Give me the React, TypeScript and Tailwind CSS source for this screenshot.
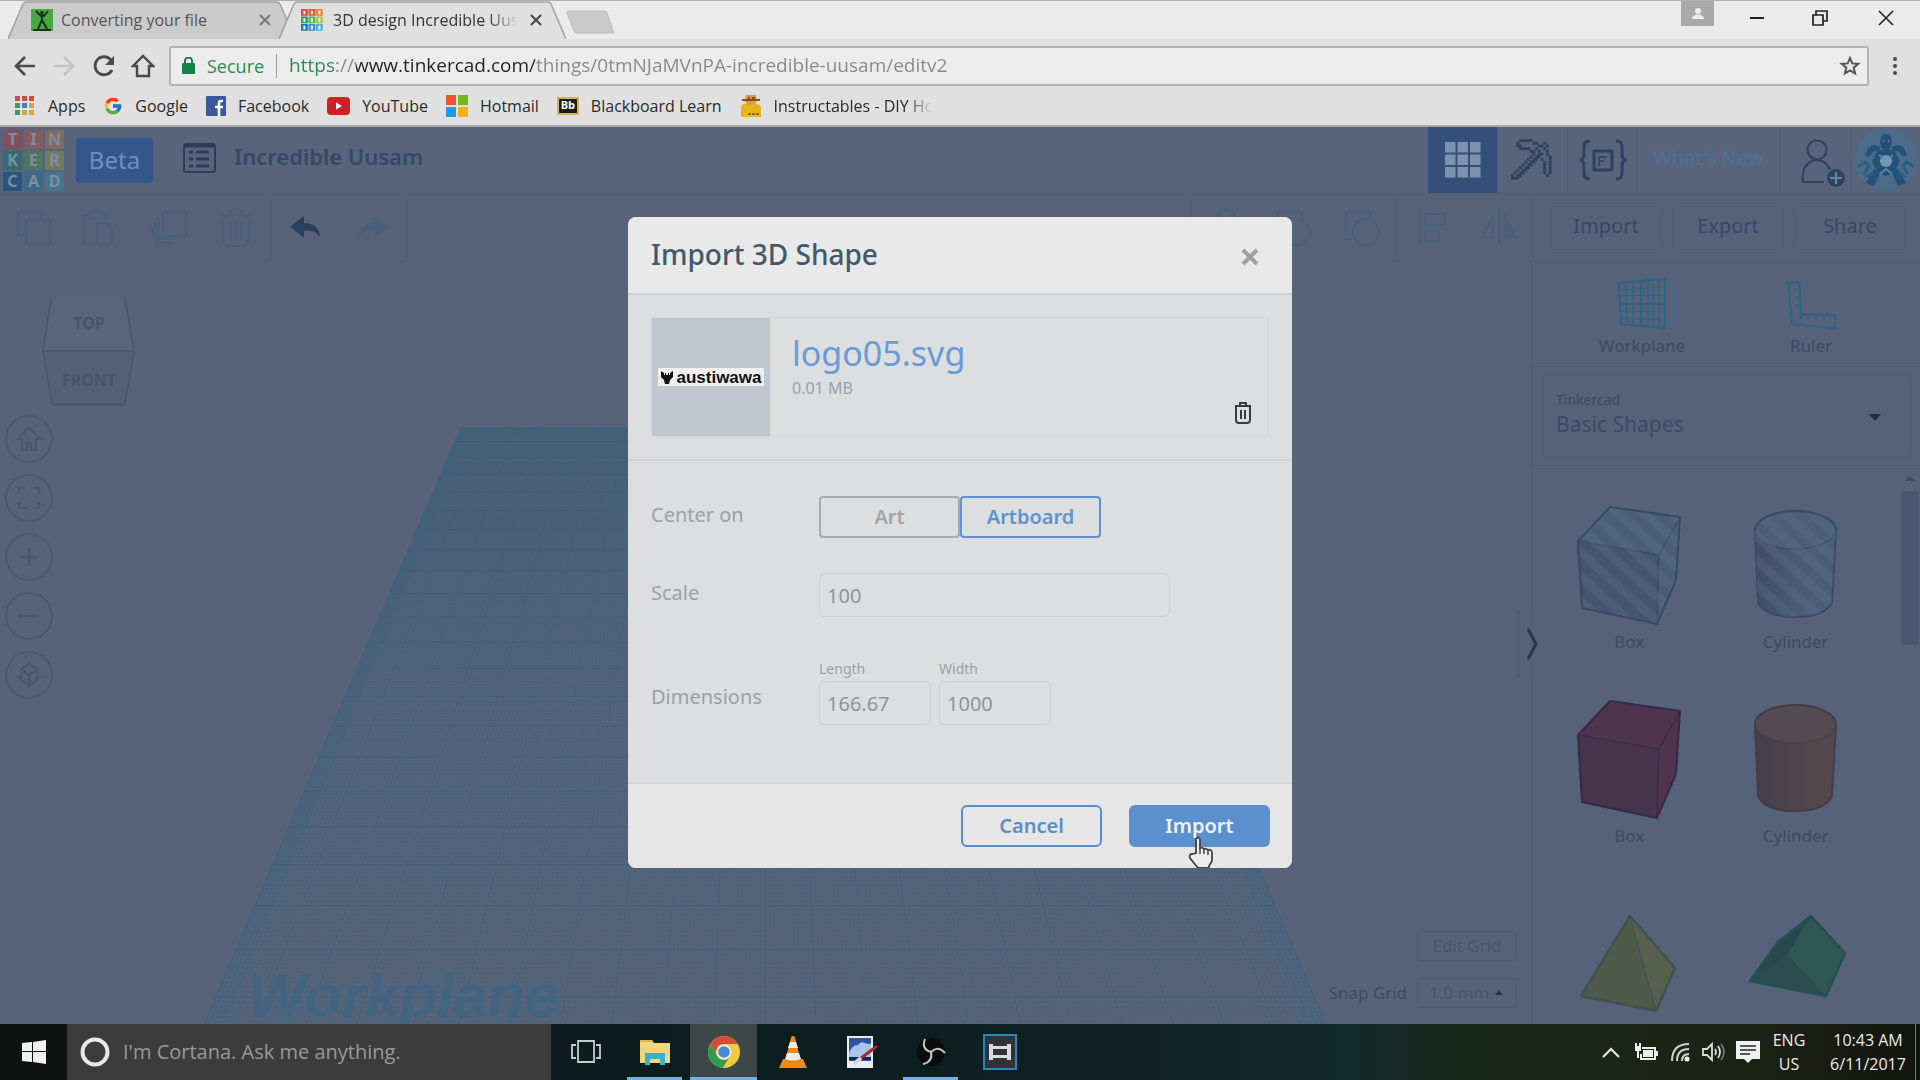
import type { ReactNode } from "react";
import { FcGoogle } from "react-icons/fc";

const pickaxe = [
    "...#####........",
    "..#.....##..#...",
    "..##......##.#..",
    "...####..#..#...",
    ".......##.#..#..",
    "........#.##.#..",
    ".......#.##...#.",
    "......#.##.#..#.",
    ".....#.##...#.#.",
    "....#.##....#.#.",
    "...#.##.....#.#.",
    "..#.##......#.#.",
    ".#.##.......#.#.",
    "#.##.........#..",
    "###.............",
];

const logoTiles = [
    { letter: "T", className: "bg-[#84505f]" },
    { letter: "I", className: "bg-[#855b63]" },
    { letter: "N", className: "bg-[#83695f]" },
    { letter: "K", className: "bg-[#356a72]" },
    { letter: "E", className: "bg-[#4f7760]" },
    { letter: "R", className: "bg-[#717b5d]" },
    { letter: "C", className: "bg-[#28557f]" },
    { letter: "A", className: "bg-[#3d6887]" },
    { letter: "D", className: "bg-[#46738f]" },
];

const favTiles = ["#d9483b", "#e0562f", "#e58a34", "#2f9e6b", "#5ab54a", "#b3bf3f", "#2273b8", "#3a93cf", "#52aee0"];

function TabShape({ fill }: { fill: string }) {
    return (
        <svg className="absolute inset-0 size-full" viewBox="0 0 287 38" preserveAspectRatio="none">
            <path d="M0 38 L15 3 Q16 1 19 1 H268 Q271 1 272 3 L287 38" fill={fill} stroke="#a2a2a2" strokeWidth="1.5" />
        </svg>
    );
}

function TabClose({ color }: { color: string }) {
    return (
        <button aria-label="Close tab" className="shrink-0">
            <svg width="12" height="12" viewBox="0 0 12 12" stroke={color} strokeWidth="2">
                <path d="M1 1l10 10M11 1L1 11" />
            </svg>
        </button>
    );
}

function TabStrip() {
    return (
        <div className="flex h-[39px] shrink-0 border-t border-[#b0b0b0] bg-[#ebebeb] pl-2">
            <div className="relative flex w-[287px] items-center pl-[23px] pr-6">
                <TabShape fill="#cbcbcb" />
                <svg className="relative" width="22" height="22" viewBox="0 0 22 22">
                    <rect width="22" height="22" fill="#49a843" />
                    <path d="M5 2l5 5h3l4-5M11 5v6l-4 9M11 11l5 9M2 21h18" stroke="#16351c" strokeWidth="2" fill="none" />
                    <circle cx="11" cy="4" r="2" fill="#16351c" />
                </svg>
                <span className="relative ml-2 flex-1 text-base text-[#555]">Converting your file</span>
                <span className="relative flex"><TabClose color="#777" /></span>
            </div>
            <div className="relative -ml-4 flex w-[287px] items-center pl-[22px] pr-6">
                <TabShape fill="#e0e0e0" />
                <svg className="relative" width="22" height="22" viewBox="0 0 22 22">
                    {favTiles.map((fill, i) => (
                        <g key={i}>
                            <rect x={(i % 3) * 7.5} y={Math.floor(i / 3) * 7.5} width="6.8" height="6.8" fill={fill} />
                            <rect x={(i % 3) * 7.5 + 2.4} y={Math.floor(i / 3) * 7.5 + 1.6} width="2" height="3.8" fill="#f2f2f2" />
                        </g>
                    ))}
                </svg>
                <span className="relative ml-[10px] mr-3 flex-1 overflow-hidden whitespace-nowrap text-base text-[#333] [mask-image:linear-gradient(90deg,#000_84%,transparent)]">
                    3D design Incredible Uusam
                </span>
                <span className="relative flex"><TabClose color="#444" /></span>
            </div>
            <button aria-label="New tab" className="self-start pt-[9px]">
                <svg width="50" height="25" viewBox="0 0 50 25">
                    <path d="M2 1H38Q40 1 41 3L48 23H11Q9 23 8 21L1 3Z" fill="#cacaca" stroke="#bbb" />
                </svg>
            </button>
            <div className="ml-auto flex">
                <button aria-label="Profile" className="mr-3 flex h-[25px] w-[33px] items-center justify-center bg-[#a9a9a9]">
                    <svg width="14" height="14" viewBox="0 0 14 14" fill="#ededed">
                        <circle cx="7" cy="4" r="3" />
                        <path d="M1 12c0-6 12-6 12 0z" />
                    </svg>
                </button>
                <button aria-label="Minimize" className="flex w-[62px] items-center justify-center pb-1">
                    <svg width="16" height="16" stroke="#222" strokeWidth="2"><path d="M1 8h14" /></svg>
                </button>
                <button aria-label="Restore" className="flex w-[64px] items-center justify-center pb-1">
                    <svg width="16" height="16" stroke="#222" strokeWidth="1.7" fill="none">
                        <path d="M1 5h10v10H1zM4 5V1h11v10h-4" />
                    </svg>
                </button>
                <button aria-label="Close" className="flex w-[68px] items-center justify-center pb-1">
                    <svg width="16" height="16" stroke="#222" strokeWidth="1.6"><path d="M1 1l14 14M15 1L1 15" /></svg>
                </button>
            </div>
        </div>
    );
}

function AddressBar() {
    return (
        <div className="flex h-[49px] shrink-0 items-center bg-[#e0e0e0] pl-3 pt-1">
            <button aria-label="Back" className="flex w-10">
                <svg width="26" height="24" viewBox="0 0 26 24" stroke="#4a4a4a" strokeWidth="2.6" fill="none">
                    <path d="M23 12H4M13 3l-9 9 9 9" />
                </svg>
            </button>
            <button aria-label="Forward" className="flex w-10">
                <svg width="26" height="24" viewBox="0 0 26 24" stroke="#c3c3c3" strokeWidth="2.6" fill="none">
                    <path d="M2 12h19M12 3l9 9-9 9" />
                </svg>
            </button>
            <button aria-label="Reload" className="flex w-[39px]">
                <svg width="24" height="24" viewBox="0 0 24 24" stroke="#4a4a4a" strokeWidth="2.8" fill="none">
                    <path d="M20 16a9 9 0 1 1-1-10" />
                    <path d="M22 2v9h-9z" fill="#4a4a4a" stroke="none" />
                </svg>
            </button>
            <button aria-label="Home" className="flex w-[38px]">
                <svg width="24" height="24" viewBox="0 0 24 24" stroke="#4a4a4a" strokeWidth="2.4" fill="none">
                    <path d="M2 12L12 2l10 10h-4v10H6V12z" />
                </svg>
            </button>
            <div className="flex h-10 flex-1 items-center rounded-[3px] border-2 border-[#b3b3b3] bg-[#ececec] pl-[11px] pr-[6px]">
                <svg width="13" height="17" viewBox="0 0 13 17">
                    <path d="M3 8V4a3.5 3.5 0 0 1 7 0v4" stroke="#178045" strokeWidth="2" fill="none" />
                    <rect y="6" width="13" height="11" rx="1" fill="#178045" />
                </svg>
                <span className="ml-3 text-lg text-[#2b8a52]">Secure</span>
                <span className="mx-3 h-6 w-px bg-[#999]" />
                <input
                    aria-label="Address"
                    className="min-w-0 flex-1 bg-[linear-gradient(90deg,#2b8a52_48px,#888_48px,#888_67px,#222_67px,#222_246px,#888_246px)] bg-clip-text text-[19px] text-transparent outline-none"
                    defaultValue="https://www.tinkercad.com/things/0tmNJaMVnPA-incredible-uusam/editv2"
                />
                <button aria-label="Bookmark this page">
                    <svg width="22" height="22" viewBox="0 0 22 22" stroke="#555" strokeWidth="2" fill="none">
                        <path d="M11 3l2.3 5.4 5.9.5-4.5 3.8 1.4 5.8L11 15.4l-5.1 3.1 1.4-5.8L2.8 8.9l5.9-.5z" />
                    </svg>
                </button>
            </div>
            <button aria-label="Menu" className="flex w-[51px] justify-center">
                <svg width="6" height="20" fill="#4a4a4a">
                    <circle cx="3" cy="3" r="2" />
                    <circle cx="3" cy="10" r="2" />
                    <circle cx="3" cy="17" r="2" />
                </svg>
            </button>
        </div>
    );
}

function Bookmark({ icon, children }: { icon: ReactNode; children: ReactNode }) {
    return (
        <a href="#" className="flex items-center gap-3 whitespace-nowrap">
            {icon}
            {children}
        </a>
    );
}

const appDots = ["#c94f45", "#c94f45", "#c94f45", "#3f9a5b", "#3b7fc4", "#d6a93c", "#3f9a5b", "#c9a94a", "#d6a93c"];

function BookmarksBar() {
    return (
        <nav className="flex h-[39px] shrink-0 items-center gap-[18px] border-b-2 border-[#a8a8a8] bg-[#e0e0e0] pb-[2px] pl-[14px] text-base text-[#2a2a2a]">
            <Bookmark
                icon={
                    <svg width="22" height="20">
                        {appDots.map((fill, i) => (
                            <rect key={i} x={1 + (i % 3) * 7} y={Math.floor(i / 3) * 7} width="5" height="5" fill={fill} />
                        ))}
                    </svg>
                }
            >
                Apps
            </Bookmark>
            <Bookmark icon={<FcGoogle size={20} />}>Google</Bookmark>
            <Bookmark
                icon={
                    <svg width="20" height="20" viewBox="0 0 20 20">
                        <rect width="20" height="20" rx="1" fill="#3b5998" />
                        <path d="M17 5h-2q-2 0-2 2v13M9 11h8" stroke="#fff" strokeWidth="2.6" fill="none" />
                    </svg>
                }
            >
                Facebook
            </Bookmark>
            <Bookmark
                icon={
                    <svg width="23" height="18" viewBox="0 0 23 18">
                        <rect width="23" height="18" rx="4" fill="#cc2127" />
                        <path d="M9 5.500l6 3.500-6 3.500z" fill="#fff" />
                    </svg>
                }
            >
                YouTube
            </Bookmark>
            <Bookmark
                icon={
                    <svg width="22" height="22">
                        <path d="M0 0h10v10H0z" fill="#e8562c" />
                        <path d="M12 0h10v10H12z" fill="#79b51c" />
                        <path d="M0 12h10v10H0z" fill="#1f9ede" />
                        <path d="M12 12h10v10H12z" fill="#efb11c" />
                    </svg>
                }
            >
                Hotmail
            </Bookmark>
            <Bookmark
                icon={
                    <span className="flex h-[18px] w-[22px] items-center justify-center border-2 border-[#d3b45a] bg-[#1c1c1c] text-[11px] font-bold text-white">
                        Bb
                    </span>
                }
            >
                Blackboard Learn
            </Bookmark>
            <Bookmark
                icon={
                    <svg width="22" height="24" viewBox="0 0 22 24">
                        <path d="M1 23V13q1-4 6-3h8q6 0 6 4v9z" fill="#e8b416" />
                        <path d="M6 1h10l1 5-2 5H7L5 6z" fill="#d99a4a" />
                        <path d="M2 6h18M8 4h2M12 4h3" stroke="#8a4a22" strokeWidth="2" />
                        <path d="M8 20h12" stroke="#8a6a12" strokeWidth="2" strokeDasharray="3 1" />
                    </svg>
                }
            >
                <span className="w-[158px] overflow-hidden [mask-image:linear-gradient(90deg,#000_84%,transparent)]">
                    Instructables - DIY How To
                </span>
            </Bookmark>
        </nav>
    );
}

function AppHeader() {
    return (
        <header className="flex h-[67px] shrink-0 items-center border-b border-[#505d77] bg-[#58647b]">
            <div className="ml-[3px] grid w-[61px] grid-cols-3 gap-[2px]">
                {logoTiles.map((tile) => (
                    <span
                        key={tile.letter}
                        className={`flex h-[19px] items-center justify-center text-base font-bold leading-none text-[#7b8ea3] ${tile.className}`}
                    >
                        {tile.letter}
                    </span>
                ))}
            </div>
            <button className="ml-3 h-[45px] w-[77px] rounded-[4px] bg-[#34568a] text-2xl text-[#7090b5]">Beta</button>
            <button aria-label="Designs" className="ml-[30px] pb-1">
                <svg width="33" height="30" viewBox="0 0 33 30" stroke="#2d3d58" fill="none">
                    <rect x="1" y="1" width="31" height="28" rx="2" strokeWidth="2" />
                    <path d="M1 3h31" strokeWidth="3" />
                    <path d="M6 9h4M6 16h4M6 23h4M13 9h13M13 16h13M13 23h13" strokeWidth="3" />
                </svg>
            </button>
            <h1 className="ml-[18px] pb-2 text-[22px] font-semibold text-[#34496a]">Incredible Uusam</h1>
            <div className="ml-auto flex h-full divide-x divide-[#505d77]">
                <button aria-label="3D view" className="flex w-[70px] items-center justify-center bg-[#34507a]">
                    <svg width="36" height="36" fill="#7d92ad">
                        {[0, 1, 2].map((row) =>
                            [0, 1, 2].map((col) => (
                                <rect key={`${row}${col}`} x={col * 12.500} y={row * 12.500} width="10.5" height="10.5" />
                            )),
                        )}
                    </svg>
                </button>
                <button aria-label="Blocks" className="flex w-[70px] items-center justify-center">
                    <svg width="43" height="42" viewBox="0 0 16 15.500" fill="#2d4262">
                        {pickaxe.map((line, y) =>
                            line.split("").map((c, x) => c === "#" && <rect key={`${x}-${y}`} x={x} y={y} width="1.05" height="1.05" />),
                        )}
                    </svg>
                </button>
                <button aria-label="Bricks" className="flex w-[70px] items-center justify-center">
                    <svg width="48" height="42" viewBox="0 0 48 42" stroke="#2d4262" strokeWidth="3" fill="none">
                        <path d="M11 2Q5 2 5 7v8q0 5-4 6 4 1 4 6v8q0 5 6 5M37 2q6 0 6 5v8q0 5 4 6-4 1-4 6v8q0 5-6 5" />
                        <path d="M15 12h18v19H15z" />
                        <path d="M20 27v-9h8M20 22h5" strokeWidth="1.500" />
                    </svg>
                </button>
                <a href="#" className="flex w-[142px] items-center justify-center pb-1 text-xl text-[#4a7096]">
                    What's New
                </a>
                <button aria-label="Invite people" className="flex w-[71px] items-center justify-center pl-4 pt-2">
                    <svg width="46" height="50" viewBox="0 0 46 50" stroke="#2d4262" strokeWidth="2.200" fill="none">
                        <circle cx="17" cy="11" r="9.500" />
                        <path d="M24 43H3q-2-16 9-21 5-2 10 0 6 3 8 9" />
                        <circle cx="36" cy="39" r="9" fill="#2d4262" stroke="none" />
                        <path d="M36 33v12M30 39h12" stroke="#6d86a5" />
                    </svg>
                </button>
                <button aria-label="Account" className="flex w-[69px] items-center justify-center">
                    <svg width="62" height="62" viewBox="0 0 62 62">
                        <circle cx="31" cy="31" r="31" fill="#4b6b88" />
                        <g fill="#23517a">
                            <ellipse cx="31" cy="13" rx="6" ry="8" />
                            <path d="M25 18Q14 12 10 26l4 2 5-6 6 1zM37 18q11-6 15 8l-4 2-5-6-6 1z" />
                            <path d="M22 23l9-4 9 4 5 9-5 11-9 4-9-4-5-11z" />
                            <path d="M19 40l-8 14 8 3 6-13zM43 40l8 14-8 3-6-13z" />
                        </g>
                        <path d="M3 38l7-5 4 4-5 8M59 38l-7-5-4 4 5 8M12 48l6-4M50 48l-6-4" fill="none" stroke="#2a5e85" strokeWidth="3" />
                        <circle cx="31" cy="32" r="6" fill="#7795ad" />
                        <path d="M25 45l6-5 6 5M24 26l4 3M38 26l-4 3M28 12h1M33 12h1" stroke="#5f83a3" strokeWidth="2" fill="none" />
                    </svg>
                </button>
            </div>
        </header>
    );
}

function Tool({ label, children, active }: { label: string; children: ReactNode; active?: boolean }) {
    return (
        <button aria-label={label} className={active ? "w-[68px] text-[#2c405d]" : "w-[68px] text-[#4a5f79]"}>
            <svg className="mx-auto" width="38" height="42" viewBox="0 0 38 42" stroke="currentColor" strokeWidth="2" fill="none">
                {children}
            </svg>
        </button>
    );
}

function Toolbar() {
    return (
        <div className="flex h-[68px] shrink-0 border-b border-[#515e77] bg-[#566279]">
            <div className="flex w-[271px] border-r border-[#505d76]">
                <Tool label="Copy">
                    <path d="M10 28H3V5h23v8M11 13h24v24H11z" />
                </Tool>
                <Tool label="Paste">
                    <path d="M25 14V8h-6M8 8H2v29h14M8 6h3q0-4 3-4t3 4h3v5H8zM15 16h9l6 6v15H15z" />
                </Tool>
                <Tool label="Duplicate">
                    <path d="M13 5h23v24H13zM9 10v22h20M5 15l2 21 18-1M2 20l4 20 15-2" />
                </Tool>
                <Tool label="Delete">
                    <path d="M4 8h30M14 7q0-5 5-5t5 5M6 13l1 23q1 3 4 3h16q3 0 4-3l1-23M14 15v19M19 15v19M24 15v19" />
                </Tool>
            </div>
            <div className="flex w-[137px] border-r border-[#505d76]">
                <Tool label="Undo" active>
                    <path d="M4 20L18 9v7q15 0 16 14-6-8-16-6v7z" fill="currentColor" stroke="none" />
                </Tool>
                <Tool label="Redo">
                    <path d="M35 20L21 9v7Q6 16 5 30q6-8 16-6v7z" fill="currentColor" stroke="none" />
                </Tool>
            </div>
            <div className="ml-auto flex w-[207px] border-x border-[#505d76]">
                <Tool label="Show all">
                    <circle cx="19" cy="13" r="10" />
                </Tool>
                <Tool label="Group">
                    <path d="M2 5h25v8q10 6 8 16-4 9-14 9-8-1-11-8H2z" />
                </Tool>
                <Tool label="Ungroup">
                    <path d="M10 32H3V5h25v7" />
                    <circle cx="23" cy="25" r="13" />
                </Tool>
            </div>
            <div className="flex w-[136px] border-r border-[#505d76]">
                <Tool label="Align">
                    <path d="M7 1v38M12 7h20v11H12zM12 24h14v10H12z" />
                </Tool>
                <Tool label="Mirror">
                    <path d="M19 1v38M13 8v23H2z" />
                    <path d="M25 8v23h11z" fill="currentColor" />
                </Tool>
            </div>
            <div className="flex items-center gap-[10px] pl-4 pr-[14px] text-xl text-[#36476a]">
                <button className="h-[44px] w-[112px] rounded border border-[#505d76] pb-1">Import</button>
                <button className="h-[44px] w-[112px] rounded border border-[#505d76] pb-1">Export</button>
                <button className="h-[44px] w-[112px] rounded border border-[#505d76] pb-1">Share</button>
            </div>
        </div>
    );
}

// One-point perspective grid: rows are evenly spaced in 1 / (distance from the vanishing point).
function WorkplaneGrid() {
    const vanishY = -541;
    const topY = 165;
    const bottomY = 762;
    const rows = [];
    const cols = [];
    const near = 1 / (997 - 262 - vanishY);
    for (let i = -8; i < 210; i++) {
        const y = 1 / (near + i * 0.00000302) + vanishY;
        if (y < topY || y > bottomY) continue;
        const half = (561 * (y - vanishY)) / (bottomY - vanishY);
        const major = i % 10 === 0;
        rows.push(<path key={i} d={`M${765 - half} ${y}H${765 + half}`} strokeOpacity={major ? 0.6 : 0.13} />);
    }
    for (let i = -110; i <= 110; i++) {
        const major = i % 10 === 0;
        cols.push(<path key={i} d={`M${765 + i * 2.763} ${topY}L${765 + i * 5.1} ${bottomY}`} strokeOpacity={major ? 0.5 : 0.1} />);
    }
    return (
        <svg className="absolute inset-0 size-full" viewBox="0 0 1531 762" preserveAspectRatio="xMinYMin slice">
            <defs>
                <linearGradient id="plane" x1="0" y1="0" x2="0" y2="1">
                    <stop offset="0" stopColor="#486279" />
                    <stop offset="0.4" stopColor="#50637a" />
                    <stop offset="1" stopColor="#54657b" />
                </linearGradient>
            </defs>
            <path d="M461 165H1069L1326 762H204z" fill="url(#plane)" />
            <path d="M461 165h11L224 762h-20zM1069 165h-11l248 597h20zM461 165h608l3 7H458z" fill="#3f6380" fillOpacity="0.35" />
            <g stroke="#3a5d7a">{rows}{cols}</g>
            <text x="248" y="755" fontSize="61" fill="#436480" className="font-['Liberation_Sans',sans-serif] font-bold italic">
                Workplane
            </text>
        </svg>
    );
}

function RoundButton({ label, children }: { label: string; children: ReactNode }) {
    return (
        <button aria-label={label} className="flex size-12 items-center justify-center rounded-full border-2 border-[#4c5972]">
            <svg width="26" height="26" viewBox="0 0 26 26" stroke="#4a5770" strokeWidth="2.2" fill="none">
                {children}
            </svg>
        </button>
    );
}

function Canvas() {
    return (
        <div className="relative min-w-0 flex-1 overflow-hidden bg-[#58637a]">
            <WorkplaneGrid />
            <div className="relative pl-[5px] pt-9">
                <svg className="ml-9" width="96" height="110" viewBox="0 0 96 110">
                    <path d="M10 1h74l9 52H2z" fill="#59657d" />
                    <path d="M2 53h91l-9 54H12z" fill="#545f78" />
                    <path d="M10 1L2 53l9 53h73l9-53L84 1M2 53h91M11 107h73" fill="none" stroke="#485671" strokeWidth="1.500" />
                    <text x="48" y="31" textAnchor="middle" fontSize="16" fontWeight="700" fill="#47546f">TOP</text>
                    <text x="48" y="88" textAnchor="middle" fontSize="16" fontWeight="700" fill="#47546f">FRONT</text>
                </svg>
                <div className="mt-[7px] flex flex-col gap-[11px]">
                    <RoundButton label="Home view">
                        <path d="M2 13L13 2l11 11h-4v11h-5v-7h-4v7H6V13z" />
                    </RoundButton>
                    <RoundButton label="Fit all in view">
                        <path d="M3 9V3h6M17 3h6v6M23 17v6h-6M9 23H3v-6" />
                    </RoundButton>
                    <RoundButton label="Zoom in">
                        <path d="M13 4v18M4 13h18" />
                    </RoundButton>
                    <RoundButton label="Zoom out">
                        <path d="M3 13h20" />
                    </RoundButton>
                    <RoundButton label="Perspective">
                        <path d="M13 2l8 5v11l-8 6-8-6V7zM5 7l8 6 8-6M13 13v11M1 14l12 10 12-10" />
                    </RoundButton>
                </div>
            </div>
            <div className="absolute bottom-4 right-[14px] grid grid-cols-[auto_100px] items-center gap-x-[10px] gap-y-[17px] text-[17px] text-[#3a4b68]">
                <span />
                <button className="h-[30px] rounded border border-[#505d76] text-[#46566f]">Edit Grid</button>
                <label htmlFor="snap">Snap Grid</label>
                <div className="relative">
                    <select id="snap" className="h-[30px] w-full appearance-none rounded border border-[#505d76] pl-[11px] text-[17px] text-[#46566f]">
                        <option>1.0 mm</option>
                    </select>
                    <svg className="absolute right-[14px] top-3" width="8" height="5" fill="#2a3850"><path d="M0 5l4-5 4 5z" /></svg>
                </div>
            </div>
            <button aria-label="Collapse panel" className="absolute right-0 top-[349px] flex h-[66px] w-[14px] items-center border-y border-l border-[#505d76] bg-[#566279]" />
        </div>
    );
}

function BoxShape({ front, side, stroke, striped }: { front: string; side: string; stroke: string; striped?: boolean }) {
    return (
        <svg width="110" height="122" viewBox="0 0 110 122" stroke={stroke} strokeLinejoin="round">
            <path d="M36 3L106 13 85 51 4 37z" fill={side} />
            <path d="M4 37L85 51 83 120 8 104z" fill={front} />
            <path d="M106 13L102 76 83 120 85 51z" fill={side} />
            {striped && <path d="M36 3L106 13 102 76 83 120 8 104 4 37z" fill="url(#stripes)" />}
            <path d="M36 3L106 13 102 76 83 120 8 104 4 37z" fill="none" strokeWidth="2" />
        </svg>
    );
}

function CylinderShape({ id, top, dark, light, stroke, striped }: { id: string; top: string; dark: string; light: string; stroke: string; striped?: boolean }) {
    const body = "M14 26L17 98Q24 113 54 113T91 98L95 26z";
    return (
        <svg width="110" height="122" viewBox="0 0 110 122" stroke={stroke}>
            <defs>
                <linearGradient id={id}>
                    <stop offset="0" stopColor={dark} />
                    <stop offset="0.7" stopColor={light} />
                </linearGradient>
            </defs>
            <path d={body} fill={`url(#${id})`} strokeWidth="2" />
            <ellipse cx="54.500" cy="26" rx="40.500" ry="19" fill={top} strokeWidth="1" />
            {striped && <path d="M14 26a40.500 19 0 0 1 81 0L91 98Q84 113 54 113T17 98z" fill="url(#stripes)" stroke="none" />}
            <path d="M14 26a40.500 19 0 0 1 81 0" fill="none" strokeWidth="2" />
        </svg>
    );
}

const shapes = [
    {
        name: "Box",
        drawing: <BoxShape front="#43556f" side="#4a5e77" stroke="#3a4a66" striped />,
    },
    {
        name: "Cylinder",
        drawing: <CylinderShape id="cylHole" top="#4b5f78" dark="#3f4e6b" light="#4b5f78" stroke="#3a4a66" striped />,
    },
    { name: "Box", drawing: <BoxShape front="#46334c" side="#4e354d" stroke="#37294a" /> },
    {
        name: "Cylinder",
        drawing: <CylinderShape id="cylSolid" top="#524b50" dark="#433f4c" light="#53474b" stroke="#443d4b" />,
    },
    {
        name: "",
        drawing: (
            <svg width="110" height="122" viewBox="0 0 110 122" stroke="#3e5350" strokeLinejoin="round">
                <path d="M56 24L82 119 7 104z" fill="#505a4b" />
                <path d="M56 24L101 76 82 119z" fill="#57604f" />
                <path d="M56 24L101 76 82 119 7 104z" fill="none" strokeWidth="2.500" />
            </svg>
        ),
    },
    {
        name: "",
        drawing: (
            <svg width="110" height="122" viewBox="0 0 110 122" stroke="#24504f" strokeLinejoin="round">
                <path d="M70 24L37 50 9 89 46 63z" fill="#28474e" />
                <path d="M46 63L85 104 9 89z" fill="#2a4b50" />
                <path d="M70 24L104 61 85 104 46 63z" fill="#2f5853" />
                <path d="M70 24L104 61 85 104 9 89 37 50z" fill="none" strokeWidth="2.500" />
            </svg>
        ),
    },
];

function ShapesPanel() {
    return (
        <aside className="relative flex w-[389px] shrink-0 flex-col border-l border-[#505d76] bg-[#566279] text-[17px] text-[#3a4b68]">
            <svg className="absolute -left-[5px] top-[366px]" width="12" height="32" stroke="#27344f" strokeWidth="3" fill="none">
                <path d="M1 1l8 15-8 15" />
            </svg>
            <div className="flex h-[105px] border-b border-[#505d76] pl-[26px]">
                <button className="flex w-[168px] flex-col items-center pt-4 leading-6">
                    <svg width="50" height="52" viewBox="0 0 50 52" stroke="#2c6486" fill="none">
                        <path d="M2 5L48 1v49L4 46z" strokeWidth="2" />
                        <path d="M9 4l1 42M16 4v43M31 3v45M36 2v47M42 2v47M2 12l46-3M3 18l45-1M3 33l45 1M4 40l44 2" strokeWidth="1.200" />
                        <path d="M24 3v45M3 26h45" strokeWidth="2" />
                    </svg>
                    <span className="mt-1">Workplane</span>
                </button>
                <button className="flex w-[170px] flex-col items-center pt-4 leading-6">
                    <svg width="50" height="52" viewBox="0 0 50 52" stroke="#2c6486" fill="none">
                        <path d="M2 4h11l2 32 34 1v13L6 46z" strokeWidth="2.200" />
                        <path d="M8 12h4M9 20h4M9 28h4M15 36v6M22 37v5M30 38v4M38 38v4" strokeWidth="1.500" />
                    </svg>
                    <span className="mt-1">Ruler</span>
                </button>
            </div>
            <div className="relative border-b border-[#505d76] py-2 pl-[10px] pr-2">
                <div className="flex h-[82px] flex-col rounded border border-[#505d76] pl-[13px] pt-[14px]">
                    <label htmlFor="library" className="text-sm">Tinkercad</label>
                    <select id="library" className="w-full appearance-none text-[21px] leading-7">
                        <option>Basic Shapes</option>
                    </select>
                </div>
                <svg className="absolute right-[39px] top-[47px]" width="12" height="7" fill="#222d47"><path d="M0 0h12L6 7z" /></svg>
            </div>
            <div className="flex min-h-0 flex-1">
                <svg width="0" height="0" className="absolute">
                    <defs>
                        <pattern id="stripes" width="18" height="18" patternUnits="userSpaceOnUse" patternTransform="rotate(-48)">
                            <rect width="9" height="18" fill="#5b7088" fillOpacity="0.320" />
                        </pattern>
                    </defs>
                </svg>
                <div className="grid flex-1 auto-rows-[194px] grid-cols-2 overflow-hidden pl-[14px] pr-5">
                    {shapes.map((shape, i) => (
                        <button key={i} className="flex flex-col items-center pt-[38px]">
                            {shape.drawing}
                            <span className="mt-1 leading-6">{shape.name}</span>
                        </button>
                    ))}
                </div>
                <div className="flex w-[21px] flex-col items-center pt-[10px]">
                    <svg width="10" height="5" fill="#3f4d68"><path d="M0 5l5-5 5 5z" /></svg>
                    <div className="mt-[10px] h-[154px] w-[18px] bg-[#4b5770]" />
                </div>
            </div>
        </aside>
    );
}

function ImportDialog() {
    return (
        <div
            role="dialog"
            aria-labelledby="dialog-title"
            className="absolute left-1/2 top-[90px] w-[664px] -translate-x-1/2 overflow-hidden rounded-lg bg-[#dcdee0] text-xl text-[#98a2aa]"
        >
            <div className="flex h-[78px] items-center justify-between border-b-2 border-[#d0d1d3] bg-[#e9e9e9] px-[23px]">
                <h2 id="dialog-title" className="text-[28px] font-medium text-[#43586b]">Import 3D Shape</h2>
                <button aria-label="Close dialog" className="px-[10px] pt-1">
                    <svg width="18" height="18" stroke="#a0a0a0" strokeWidth="4"><path d="M2 2l14 14M16 2L2 16" /></svg>
                </button>
            </div>
            <div className="border-b-2 border-[#d3d5d8] px-[23px] pb-[22px] pt-[22px]">
                <div className="flex h-[120px] border border-[#d6d8db]">
                    <div className="flex w-[118px] items-center justify-center bg-[#c2c6d0]">
                        <div className="flex h-[18px] items-center gap-[2px] bg-[#efefef] px-[2px] font-['Liberation_Sans',sans-serif] text-[17px] font-bold leading-none text-[#111]">
                            <svg width="14" height="14" viewBox="0 0 14 14" fill="#111">
                                <path d="M1 1l3 2v2h1V3h1v2h2V3h1v2h1V3l3-2v6l-3 3-1 4H5l-1-4-3-3z" />
                            </svg>
                            austiwawa
                        </div>
                    </div>
                    <div className="flex-1 pl-[22px] pt-3">
                        <p className="text-[34px] leading-[46px] text-[#6a9bd6]">logo05.svg</p>
                        <p className="text-base leading-6">0.01 MB</p>
                    </div>
                    <button aria-label="Remove file" className="self-end pb-3 pr-4">
                        <svg width="18" height="22" viewBox="0 0 18 22" stroke="#3c3c3c" strokeWidth="2" fill="none">
                            <path d="M1 4h16M6 4V1h6v3M2 5v13q0 3 3 3h8q3 0 3-3V5M7 8v9M11 8v9" />
                        </svg>
                    </button>
                </div>
            </div>
            <form className="flex flex-col px-[23px] pb-[57px] pt-[35px]">
                <div className="flex h-[42px] items-center">
                    <span className="w-[168px] pb-1">Center on</span>
                    <button type="button" className="h-[42px] w-[141px] rounded border-2 border-[#a9abad] font-semibold text-[#a2a5a8]">
                        Art
                    </button>
                    <button type="button" className="h-[42px] w-[141px] rounded border-2 border-[#5f93d2] font-semibold text-[#5f93d2]">
                        Artboard
                    </button>
                </div>
                <div className="mt-[35px] flex h-[44px] items-center">
                    <label htmlFor="scale" className="w-[168px] pb-1">Scale</label>
                    <input id="scale" className="h-[44px] w-[351px] rounded-md border border-[#cdd1d5] pl-[7px] text-[#8d969d]" defaultValue="100" />
                </div>
                <div className="mt-10 flex items-end">
                    <span className="w-[168px] pb-[14px]">Dimensions</span>
                    <label className="flex w-[112px] flex-col text-sm leading-6">
                        Length
                        <input className="h-[44px] rounded-md border border-[#cdd1d5] pl-[7px] text-xl text-[#8d969d]" defaultValue="166.67" />
                    </label>
                    <label className="ml-2 flex w-[112px] flex-col text-sm leading-6">
                        Width
                        <input className="h-[44px] rounded-md border border-[#cdd1d5] pl-[7px] text-xl text-[#8d969d]" defaultValue="1000" />
                    </label>
                </div>
            </form>
            <div className="relative flex h-[86px] items-center justify-end gap-[27px] border-t-2 border-[#d5d7d9] bg-[#e6e6e6] px-[22px] font-semibold">
                <button className="h-[42px] w-[141px] rounded-md border-2 border-[#5a8dcb] text-[#5a8dcb]">Cancel</button>
                <button className="h-[42px] w-[141px] rounded-md bg-[#5b8fcd] text-[#eef3f9]">Import</button>
                <svg className="absolute right-[77px] top-[52px]" width="28" height="34" viewBox="0 0 28 34">
                    <path
                        d="M9 17V3q2-3 4 0v9q2-1 4 1 2-1 4 1 3-1 4 2v9l-3 5v2H11L3 22q-1-4 2-4z"
                        fill="#ececec"
                        stroke="#444"
                        strokeWidth="1.800"
                    />
                    <path d="M13 12v6M17 13v5M21 14v5" stroke="#444" strokeWidth="1.500" />
                </svg>
            </div>
        </div>
    );
}

function TaskButton({ label, state, children }: { label: string; state?: "open" | "active"; children: ReactNode }) {
    return (
        <button
            aria-label={label}
            className={`relative flex w-[67px] items-center justify-center ${state === "active" ? "bg-[#3d4748]" : ""}`}
        >
            {children}
            {state && (
                <span className={`absolute bottom-0 h-[3px] bg-[#76aede] ${state === "active" ? "inset-x-0" : "inset-x-[6px]"}`} />
            )}
        </button>
    );
}

function Taskbar() {
    return (
        <footer className="flex h-14 shrink-0 bg-[linear-gradient(90deg,#0d1a1b_0%,#0d1f21_55%,#112b29_70%,#1c2717_80%,#1d2014_92%,#11150f_100%)] font-['Open_Sans',sans-serif]">
            <button aria-label="Start" className="flex w-[67px] items-center justify-center bg-[#0e1211]">
                <svg width="24" height="24" viewBox="0 0 24 24" fill="#f0f0f0">
                    <path d="M0 3l10-1v9H0zM11 2l13-2v11H11zM0 12h10v10L0 21zM11 12h13v12l-13-2z" />
                </svg>
            </button>
            <label className="flex w-[484px] items-center bg-[#3c3c3c] pl-3">
                <svg width="32" height="32">
                    <circle cx="16" cy="16" r="12.500" stroke="#e8e8e8" strokeWidth="4" fill="none" />
                </svg>
                <input
                    aria-label="Search"
                    className="ml-3 flex-1 text-[20px] text-[#999] outline-none placeholder:text-[#999]"
                    placeholder="I'm Cortana. Ask me anything."
                />
            </label>
            <div className="flex gap-[2px] pl-px">
                <TaskButton label="Task view">
                    <svg width="30" height="24" viewBox="0 0 30 24" stroke="#c6cccc" strokeWidth="1.800" fill="none">
                        <path d="M7 1h16v21H7zM5 5H1v13h4M25 5h4v13h-4" />
                    </svg>
                </TaskButton>
                <TaskButton label="File Explorer" state="open">
                    <svg width="32" height="28" viewBox="0 0 32 28">
                        <path d="M1 2h12l2 3h16v20H1z" fill="#f0d67e" />
                        <path d="M1 2h12l1 2H1z" fill="#dfb84b" />
                        <path d="M6 15h20v12h-5v-6H11v6H6z" fill="#38b1cf" />
                    </svg>
                </TaskButton>
                <TaskButton label="Google Chrome" state="active">
                    <svg width="32" height="32" viewBox="0 0 32 32">
                        <circle cx="16" cy="16" r="16" fill="#f3ca3e" />
                        <path d="M2.200 8A16 16 0 0 1 29.800 8H16a8 8 0 0 0-7 12z" fill="#d64a3c" />
                        <path d="M2.200 8A16 16 0 0 0 14.500 32L21 22a8 8 0 0 1-12-2z" fill="#2e9a53" />
                        <circle cx="16" cy="16" r="7.500" fill="#eee" />
                        <circle cx="16" cy="16" r="5.800" fill="#4a86d8" />
                    </svg>
                </TaskButton>
                <TaskButton label="VLC">
                    <svg width="28" height="33" viewBox="0 0 28 33">
                        <path d="M4 23h20l4 9H0z" fill="#ee8a1c" />
                        <path d="M14 0q2 0 2 2l6 23q-8 4-16 0l6-23q0-2 2-2z" fill="#ee8a1c" />
                        <path d="M11 6h6l2 6H9zM8 17h12l2 6q-8 3-16 0z" fill="#ececec" />
                    </svg>
                </TaskButton>
                <TaskButton label="Paint">
                    <svg width="32" height="34" viewBox="0 0 32 34">
                        <path d="M1 1h26v32H1z" fill="#e9edf2" />
                        <path d="M3 3h22v23H3z" fill="#2c559f" />
                        <path d="M3 18q3-8 9-8 3-4 7-2 5 2 6 0v14H3z" fill="#a9c4e6" />
                        <path d="M3 22h22v3H3z" fill="#15264f" />
                        <path d="M31 11L14 24" stroke="#a3292c" strokeWidth="3" />
                        <path d="M15 23l-7 6" stroke="#d5d5dd" strokeWidth="4" />
                    </svg>
                </TaskButton>
                <TaskButton label="OBS Studio" state="open">
                    <svg width="30" height="30" viewBox="0 0 30 30" fill="none">
                        <circle cx="15" cy="15" r="14" fill="#0b0b0b" />
                        <path d="M15 15Q5 12 9 2M15 15q7-7 14 1M15 15q2 10-8 12" stroke="#c4c4c4" strokeWidth="2" />
                    </svg>
                </TaskButton>
                <TaskButton label="Movie Maker">
                    <svg width="34" height="36" viewBox="0 0 34 36">
                        <path d="M1 1h32v34H1z" fill="#303236" stroke="#2a86b8" strokeWidth="2" />
                        <path d="M6 10h4v16H6zM24 10h4v16h-4zM10 12h14v3H10zM10 21h14v3H10z" fill="#dcdcdc" />
                    </svg>
                </TaskButton>
            </div>
            <div className="ml-auto flex items-center text-base text-[#ececec]">
                <svg width="18" height="11" stroke="#e4e4e4" strokeWidth="2.200" fill="none"><path d="M1 10l8-8 8 8" /></svg>
                <svg className="ml-[14px]" width="24" height="20" viewBox="0 0 24 20" fill="none" stroke="#ececec" strokeWidth="2">
                    <path d="M8 6h13v11H7v-5M23 9v5M2 1v4M6 1v4M4 9v7" />
                    <path d="M1 4h6v5H1zM9 8h10v7H9z" fill="#ececec" stroke="none" />
                </svg>
                <svg className="ml-[13px]" width="20" height="20" viewBox="0 0 20 20" fill="none" stroke="#d0d0d0" strokeWidth="2">
                    <path d="M1 19Q1 2 18 2M6 19Q6 7 18 7M11 19q0-7 7-7" />
                    <circle cx="16" cy="17" r="2.500" fill="#fff" stroke="none" />
                </svg>
                <svg className="ml-[11px]" width="24" height="20" viewBox="0 0 24 20" fill="none" stroke="#dcdcdc" strokeWidth="1.800">
                    <path d="M1 7h4l5-5v16l-5-5H1zM13 7q2 3 0 6M16 4q4 6 0 12" />
                    <path d="M19 2q6 8 0 16" stroke="#777" />
                </svg>
                <svg className="ml-[10px]" width="24" height="24" viewBox="0 0 24 24">
                    <path d="M0 1h24v18h-8l-4 4-4-4H0z" fill="#f0f0f0" />
                    <path d="M4 6h16M4 10h16M4 14h10" stroke="#222" strokeWidth="1.600" />
                </svg>
                <span className="w-[58px] text-center leading-6">ENG<br />US</span>
                <span className="ml-1 w-[92px] whitespace-nowrap text-center leading-6">10:43 AM<br />6/11/2017</span>
                <span className="ml-px mr-1 h-14 w-px bg-[#777]" />
            </div>
        </footer>
    );
}

export default function App() {
    return (
        <div className="flex h-screen flex-col overflow-hidden font-['Open_Sans',sans-serif]">
            <TabStrip />
            <AddressBar />
            <BookmarksBar />
            <main className="relative flex min-h-0 flex-1 flex-col font-['Noto_Sans',sans-serif]">
                <AppHeader />
                <Toolbar />
                <div className="flex min-h-0 flex-1">
                    <Canvas />
                    <ShapesPanel />
                </div>
                <ImportDialog />
            </main>
            <Taskbar />
        </div>
    );
}
